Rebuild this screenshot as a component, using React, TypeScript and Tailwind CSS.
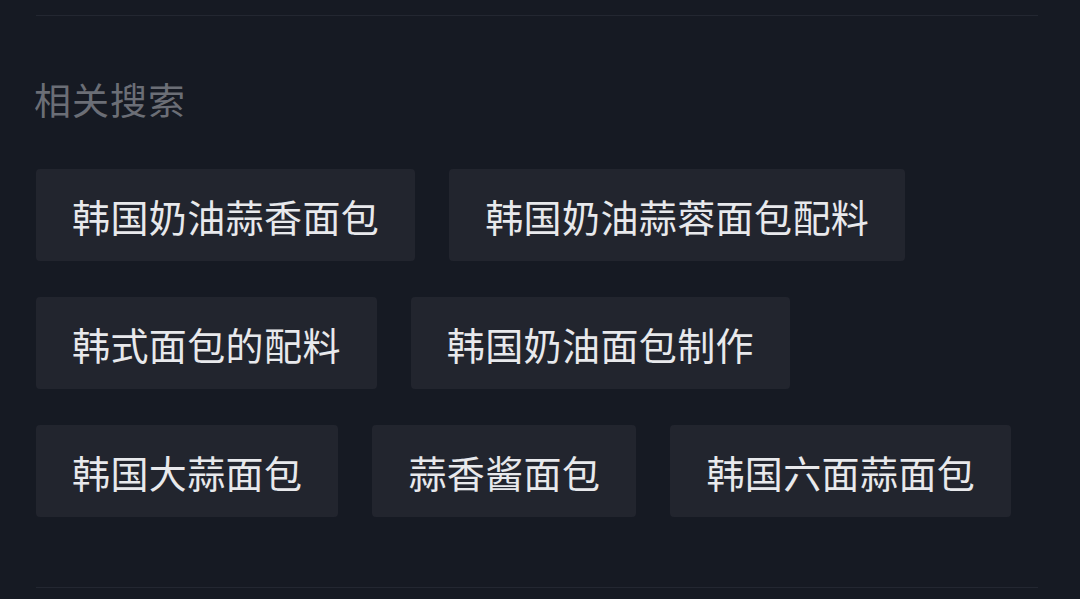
import React from "react";

const tags = [
  "韩国奶油蒜香面包",
  "韩国奶油蒜蓉面包配料",
  "韩式面包的配料",
  "韩国奶油面包制作",
  "韩国大蒜面包",
  "蒜香酱面包",
  "韩国六面蒜面包",
];

export default function App() {
  return (
    <div
      className="w-[1080px] h-[599px] overflow-hidden bg-[#161a23] pl-[36px] pr-[42px] pt-[15px]"
      style={{ fontFamily: '"Noto Sans CJK SC", "Noto Sans", sans-serif' }}
    >
      <div className="h-px bg-[#232731]" />

      <h3 className="mt-[60px] text-[37px] leading-[46px] tracking-[1px] text-[#6b6e76] -ml-[2px]">相关搜索</h3>

      <div className="mt-[47px] flex flex-wrap gap-x-[34px] gap-y-[36px]">
        {tags.map((t) => (
          <div
            key={t}
            className="h-[92px] px-[36px] flex items-center rounded-[4px] bg-[#22252e] text-[38px] tracking-[0.4px] text-[#e8e9ec]"
          >
            {t}
          </div>
        ))}
      </div>

      <div className="mt-[70px] h-px bg-[#232731]" />
    </div>
  );
}
